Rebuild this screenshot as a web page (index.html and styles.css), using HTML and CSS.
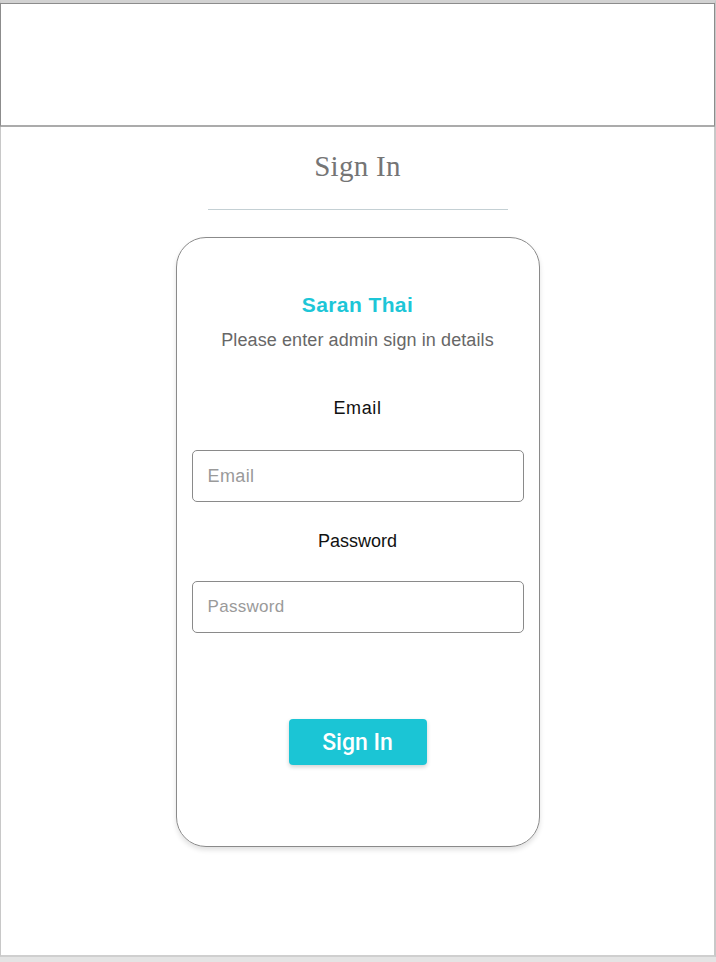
FILE: index.html
```html
<!DOCTYPE html>
<html lang="en">
<head>
<meta charset="utf-8">
<title>Sign In</title>
<link rel="stylesheet" href="styles.css">
</head>
<body>
<div class="page">
  <header class="header"></header>
  <main class="main">
    <h1 class="title">Sign In</h1>
    <div class="divider"></div>
    <form class="card">
      <div class="brand">Saran Thai</div>
      <p class="subtitle">Please enter admin sign in details</p>
      <label class="label label-email" for="email">Email</label>
      <input class="field" id="email" type="text" placeholder="Email">
      <label class="label label-pass" for="password">Password</label>
      <input class="field field-pass" id="password" type="password" placeholder="Password">
      <button class="btn" type="button">Sign In</button>
    </form>
  </main>
</div>
</body>
</html>
```

FILE: styles.css
```css
html, body {
  margin: 0;
  padding: 0;
}
body {
  background: #e4e4e4;
  font-family: "Liberation Sans", Arial, sans-serif;
}
.page {
  box-sizing: border-box;
  width: 716px;
  height: 957px;
  background: #ffffff;
  border-top: 3px solid #d2d2d2;
  border-left: 1px solid #c8c8c8;
  border-right: 2px solid #c8c8c8;
  border-bottom: 2px solid #cfcfcf;
}
.header {
  box-sizing: border-box;
  height: 124px;
  margin-left: -1px;
  margin-right: -1px;
  border: 1px solid #8c8c8c;
  border-bottom: 2px solid #ababab;
}
.main {
  display: flex;
  flex-direction: column;
  align-items: center;
}
.title {
  margin: 22px 0 0;
  font-family: "Liberation Serif", "DejaVu Serif", serif;
  font-weight: normal;
  font-size: 29px;
  line-height: 34px;
  color: #757575;
  letter-spacing: 0.3px;
}
.divider {
  width: 300px;
  height: 1px;
  background: #c4d0d4;
  margin-top: 26px;
}
.card {
  box-sizing: border-box;
  width: 364px;
  height: 610px;
  margin-top: 27px;
  border: 1px solid #8a8a8a;
  border-radius: 30px;
  box-shadow: 0 3px 5px rgba(0,0,0,0.12);
  padding: 55px 15px 0;
  display: flex;
  flex-direction: column;
  align-items: center;
}
.brand {
  font-size: 21px;
  line-height: 24px;
  font-weight: bold;
  color: #1dc6d7;
  letter-spacing: 0.4px;
}
.subtitle {
  margin: 13px 0 0;
  font-size: 18px;
  line-height: 20px;
  color: #676767;
  letter-spacing: 0.1px;
}
.label {
  font-size: 18px;
  line-height: 20px;
  color: #111;
}
.label-email { margin-top: 48px; letter-spacing: 0.6px; }
.label-pass { margin-top: 29px; }
.field {
  box-sizing: border-box;
  width: 332px;
  height: 52px;
  margin-top: 32px;
  border: 1px solid #8a8a8a;
  border-radius: 5px;
  padding: 0 15px;
  font-family: "Liberation Sans", Arial, sans-serif;
  font-size: 18px;
  letter-spacing: 0.4px;
  color: #333;
  outline: none;
  background: #fff;
}
.field-pass {
  margin-top: 30px;
  font-size: 17px;
  letter-spacing: 0.3px;
}
.field::placeholder {
  color: #9a9a9a;
}
.btn {
  margin-top: 86px;
  width: 138px;
  height: 46px;
  border: none;
  border-radius: 4px;
  background: #1bc5d5;
  color: #ffffff;
  font-family: Roboto, "Liberation Sans", sans-serif;
  font-weight: 500;
  font-size: 23px;
  box-shadow: 0 2px 4px rgba(0,0,0,0.18);
  cursor: pointer;
}
```
